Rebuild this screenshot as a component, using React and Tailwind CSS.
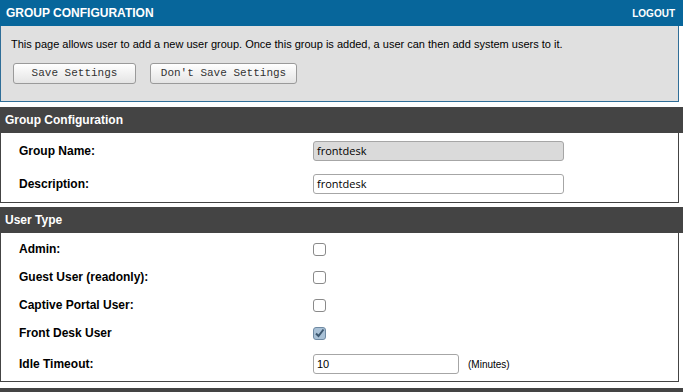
import React from 'react';

const Checkbox = ({ checked }) => (
    <span className={`inline-flex items-center justify-center w-[13px] h-[13px] rounded-[3px] border ${checked ? 'border-[#6f8aa3] bg-[#a9c1d6]' : 'border-[#8a8a8a] bg-white'}`}>
        {checked && (
            <svg width="11" height="11" viewBox="0 0 11 11">
                <path d="M2 5.5 L4.5 8 L9.5 1.5" fill="none" stroke="#3d5870" strokeWidth="2" />
            </svg>
        )}
    </span>
);

const SectionHeader = ({ title }) => (
    <div className="h-[26px] bg-[#444444] flex items-center pl-[5px] text-white text-[12px] font-bold">{title}</div>
);

const Row = ({ label, h, children }) => (
    <div className={`flex items-center ${h}`}>
        <div className="w-[312px] pl-[18px] text-[12px] font-bold text-black">{label}</div>
        <div className="flex items-center">{children}</div>
    </div>
);

const TextInput = ({ value, disabled, w = 'w-[251px]', mono }) => (
    <div className={`h-[20px] ${w} rounded-[3px] border border-[#a6a6a6] flex items-center px-[3px] text-[11px] text-black ${disabled ? 'bg-[#dadada]' : 'bg-white'}`} style={mono ? undefined : { fontFamily: '"Open Sans", sans-serif' }}>
        {value}
    </div>
);

const Button = ({ children, w }) => (
    <div className={`h-[21px] ${w} rounded-[3px] border border-[#9a9a9a] bg-gradient-to-b from-white to-[#e4e4e4] flex items-center justify-center text-[11px] text-[#333]`} style={{ fontFamily: '"Liberation Mono", monospace' }}>
        {children}
    </div>
);

export default function App() {
    return (
        <div className="w-[683px] h-[392px] overflow-hidden bg-white" style={{ fontFamily: '"Liberation Sans", Arial, sans-serif' }}>
            <div className="h-[26px] bg-[#07669b] flex items-center justify-between pl-[6px] pr-[8px] text-white font-bold">
                <span className="text-[12px]">GROUP CONFIGURATION</span>
                <span className="text-[10px]">LOGOUT</span>
            </div>
            <div className="w-[679px] h-[76px] bg-[#e0e0e0] border-x border-b border-[#2f6e98] pl-[10px] pt-[12px]">
                <div className="text-[11px] text-black leading-[13px]">This page allows user to add a new user group. Once this group is added, a user can then add system users to it.</div>
                <div className="flex gap-[14px] mt-[12px] pl-[2px]">
                    <Button w="w-[123px]">Save Settings</Button>
                    <Button w="w-[147px]">Don't Save Settings</Button>
                </div>
            </div>
            <div className="h-[5px]" />
            <SectionHeader title="Group Configuration" />
            <div className="w-[679px] border-x border-b border-[#444444] pt-[1px] pb-[2px]">
                <Row label="Group Name:" h="h-[34px]"><TextInput value="frontdesk" disabled /></Row>
                <Row label="Description:" h="h-[32px]"><TextInput value="frontdesk" /></Row>
            </div>
            <div className="h-[4px]" />
            <SectionHeader title="User Type" />
            <div className="w-[679px] border-x border-b border-[#444444] pt-[2px]">
                <Row label="Admin:" h="h-[28px]"><Checkbox /></Row>
                <Row label="Guest User (readonly):" h="h-[28px]"><Checkbox /></Row>
                <Row label="Captive Portal User:" h="h-[28px]"><Checkbox /></Row>
                <Row label="Front Desk User" h="h-[28px]"><Checkbox checked /></Row>
                <Row label="Idle Timeout:" h="h-[34px]">
                    <TextInput value="10" w="w-[146px]" mono />
                    <span className="ml-[9px] text-[10px] text-black">(Minutes)</span>
                </Row>
            </div>
            <div className="h-[6px]" />
            <div className="h-[30px] bg-[#444444]" />
        </div>
    );
}
